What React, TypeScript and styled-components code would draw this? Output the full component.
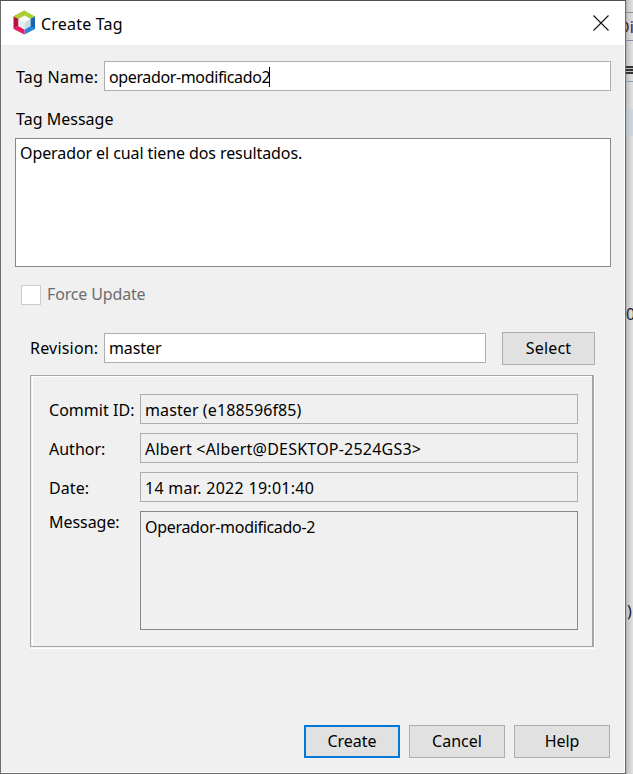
import React from 'react';
import styled, { createGlobalStyle } from 'styled-components';

const Global = createGlobalStyle`
  * { box-sizing: border-box; }
  body { margin: 0; background: #f0f0f0; overflow: hidden; }
`;

const Screen = styled.div`
  display: flex;
  width: 633px;
  height: 774px;
  overflow: hidden;
  font: 16px/22px "Noto Sans", "Open Sans", sans-serif;
  color: #000;
`;

const Dialog = styled.section`
  display: flex;
  flex-direction: column;
  flex: none;
  width: 626px;
  height: 774px;
  background: #f0f0f0;
  border: 1px solid #6b6b6b;
  border-top-color: #4d4d4f;
  box-shadow: inset -1px -1px #fff;
`;

const TitleBar = styled.header`
  display: flex;
  align-items: center;
  flex: none;
  height: 44px;
  padding: 0 16px 0 12px;
  background: #fff;
`;

const TitleIcon = styled.svg`
  flex: none;
  margin: -2px 5px 0 0;
`;

const CloseIcon = styled.svg`
  flex: none;
  margin: -1px 0 0 auto;
`;

const Text = styled.span<{ $track?: number; $muted?: boolean }>`
  white-space: pre;
  letter-spacing: ${p => p.$track ?? 0}px;
  color: ${p => (p.$muted ? '#6d6d6d' : '#000')};
`;

const Label = styled(Text)<{ $drop?: number; $lift?: number }>`
  padding-top: ${p => p.$drop ?? 0}px;
  padding-bottom: ${p => p.$lift ?? 0}px;
`;

const Body = styled.div`
  display: flex;
  flex-direction: column;
  flex: 1;
  padding: 16px 14px 15px;
`;

const FormRow = styled.div<{ $label: number; $indent?: number }>`
  display: grid;
  grid-template-columns: ${p => p.$label}px 1fr;
  align-items: center;
  padding-left: ${p => p.$indent ?? 0}px;
`;

const Field = styled.div<{ $readOnly?: boolean }>`
  display: flex;
  align-items: center;
  height: 30px;
  padding: 1px 4px 0;
  border: 1px solid #abadb3;
  background: ${p => (p.$readOnly ? '#f0f0f0' : '#fff')};
`;

const Caret = styled.i`
  width: 1px;
  height: 20px;
  margin-left: -1px;
  background: #000;
`;

const Area = styled.div<{ $height: number; $top?: number; $readOnly?: boolean }>`
  height: ${p => p.$height}px;
  padding: ${p => p.$top ?? 4}px 4px 4px;
  border: 1px solid #828790;
  background: ${p => (p.$readOnly ? '#f0f0f0' : '#fff')};
`;

const AreaLabel = styled.div`
  margin: 17px 0 8px 1px;
  height: 22px;
`;

const CheckRow = styled.div`
  display: flex;
  gap: 6px;
  height: 22px;
  margin: 16px 0 0 6px;
`;

const CheckBox = styled.span`
  width: 20px;
  height: 20px;
  margin-top: 2px;
  border: 1px solid #ccc;
  background: #fff;
`;

const RevisionRow = styled.div`
  display: grid;
  grid-template-columns: 74px 382px 93px;
  align-items: center;
  margin: 27px 0 10px 15px;
`;

const RevisionField = styled(Field)`
  margin-bottom: 1px;
  padding-top: 0;
`;

const Button = styled.button<{ $primary?: boolean }>`
  height: 33px;
  padding: 0 0 2px;
  font: inherit;
  color: #000;
  border: ${p => (p.$primary ? '2px solid #0078d7' : '1px solid #adadad')};
  border-radius: 0;
  background: #e1e1e1;
`;

const SelectButton = styled(Button)`
  width: 93px;
  margin-left: 16px;
`;

const Etched = styled.div`
  width: 565px;
  height: 274px;
  margin-left: 15px;
  padding-bottom: 1px;
  border: solid #fff;
  border-width: 0 1px 1px 0;
`;

const Details = styled.div`
  display: flex;
  flex-direction: column;
  gap: 9px;
  height: 272px;
  padding: 18px 14px 0 18px;
  border: solid #a5a5a5;
  border-width: 1px 2px 1px 1px;
  box-shadow: inset 1px 0 #f0f0f0, inset 2px 0 #fff, inset 0 1px #fff;
`;

const MessageRow = styled(FormRow)`
  align-items: start;
`;

const Actions = styled.footer`
  display: grid;
  grid-template-columns: repeat(3, 96px);
  justify-content: end;
  gap: 9px;
  margin: auto 1px 0 0;
`;

const Behind = styled.aside`
  display: flex;
  flex-direction: column;
  width: 7px;
  overflow: hidden;
  background: linear-gradient(90deg, #b0b0b0 0, #cacaca 2px, #d9d9d9 5px, #e0e0e0 7px);
`;

const Strip = styled.div<{ $height: number; $tint?: string; $line?: string }>`
  flex: none;
  height: ${p => p.$height}px;
  overflow: hidden;
  background: ${p => p.$tint ?? 'transparent'};
  border-bottom: ${p => (p.$line ? `1px solid ${p.$line}` : '0')};
`;

const Peek = styled.span<{ $shift: number; $drop?: number; $color?: string }>`
  display: block;
  margin-left: ${p => p.$shift}px;
  padding-top: ${p => p.$drop ?? 0}px;
  white-space: nowrap;
  color: ${p => p.$color ?? '#181830'};
`;

const Bars = styled.div`
  height: 8px;
  background: repeating-linear-gradient(#333 0 2px, #bbb 2px 3px);
`;

const commit = [
  { label: 'Commit ID:', lt: 0.04, value: 'master (e188596f85)', vt: 0.1 },
  { label: 'Author:', lt: 0, value: 'Albert <Albert@DESKTOP-2524GS3>', vt: 0.22 },
  { label: 'Date:', lt: 0.1, value: '14 mar. 2022 19:01:40', vt: 0.29 },
];

export default function App() {
  return (
    <>
      <Global />
      <Screen>
        <Dialog>
          <TitleBar>
            <TitleIcon width="23" height="25" viewBox="0 0 23 25">
              <path d="M.5 6.5 11.5 .5v5L5.5 9v7L.5 19z" fill="#b5123f" />
              <path d="M.5 6.5 11.5 .5 22 6.5 17.5 9 11.5 5.5 5.5 9z" fill="#a9d132" />
              <path d="m22 6.5-4.5 2.5v7l-6 3.5v5L22 19z" fill="#2487d9" />
              <path d="m22 6.5-4.5 2.5v7L22 18z" fill="#1b62b5" />
              <path d="m.5 19 5-3 6 3.5v5z" fill="#ea1b62" />
              <path d="m11.5 5.5 6 3.5-6 3.5-6-3.5z" fill="#f5faf4" />
              <path d="m5.5 9 6 3.5v7l-6-3.5z" fill="#e5eeee" />
              <path d="m17.5 9-6 3.5v7l6-3.5z" fill="#c9dedf" />
            </TitleIcon>
            <Label $drop={1} $track={0.2}>Create Tag</Label>
            <CloseIcon width="16" height="16" viewBox="0 0 16 16">
              <path d="m.5 .5 15 15m0-15-15 15" stroke="#111" strokeWidth="1.1" />
            </CloseIcon>
          </TitleBar>
          <Body>
            <FormRow $label={88} $indent={1}>
              <Label $drop={2} $track={0.25}>Tag Name:</Label>
              <Field><Text $track={-0.37}>operador-modificado2</Text><Caret /></Field>
            </FormRow>
            <AreaLabel><Text $track={0.02}>Tag Message</Text></AreaLabel>
            <Area $height={129} $top={3}>
              <Text $track={-0.09}>Operador el cual tiene dos resultados.</Text>
            </Area>
            <CheckRow><CheckBox /><Text $muted $track={-0.15}>Force Update</Text></CheckRow>
            <RevisionRow>
              <Label $lift={1} $track={0.2}>Revision:</Label>
              <RevisionField><Text $track={-0.1}>master</Text></RevisionField>
              <SelectButton><Text $track={0.2}>Select</Text></SelectButton>
            </RevisionRow>
            <Etched>
              <Details>
                {commit.map(row => (
                  <FormRow key={row.label} $label={91}>
                    <Label $drop={2} $track={row.lt}>{row.label}</Label>
                    <Field $readOnly><Text $track={row.vt}>{row.value}</Text></Field>
                  </FormRow>
                ))}
                <MessageRow $label={91}>
                  <Text $track={-0.05}>Message:</Text>
                  <Area $height={119} $readOnly><Text $track={-0.31}>Operador-modificado-2</Text></Area>
                </MessageRow>
              </Details>
            </Etched>
            <Actions>
              <Button $primary><Text>Create</Text></Button>
              <Button><Text>Cancel</Text></Button>
              <Button><Text $track={-0.08}>Help</Text></Button>
            </Actions>
          </Body>
        </Dialog>
        <Behind>
          <Strip $height={13} $line="#8a8d9a" />
          <Strip $height={28} $line="#85889a"><Peek $shift={-8} $drop={3} $color="#501820">Di</Peek></Strip>
          <Strip $height={25} />
          <Bars />
          <Strip $height={8} $line="#8c9cab" />
          <Strip $height={27} />
          <Strip $height={27} $tint="rgba(185, 200, 225, 0.4)" />
          <Strip $height={167} />
          <Strip $height={24}><Peek $shift={0}>0</Peek></Strip>
          <Strip $height={273} />
          <Strip $height={24}><Peek $shift={1}>)</Peek></Strip>
        </Behind>
      </Screen>
    </>
  );
}
